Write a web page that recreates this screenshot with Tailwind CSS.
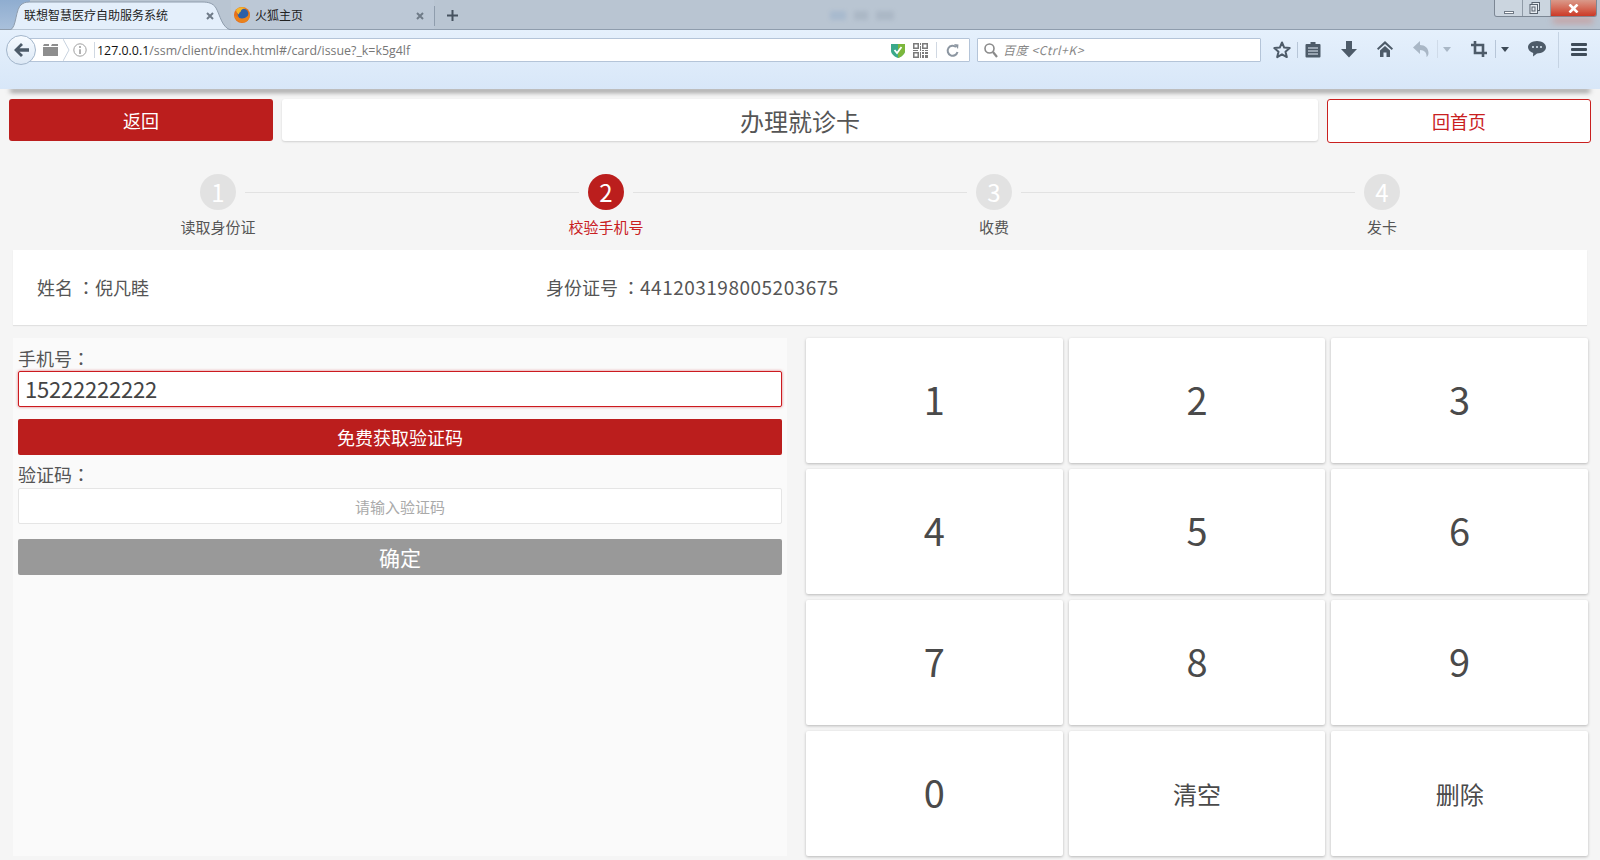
<!doctype html>
<html lang="zh">
<head>
<meta charset="utf-8">
<title>联想智慧医疗自助服务系统</title>
<script src="https://cdn.jsdelivr.net/npm/@tailwindcss/browser@4"></script>
</head>
<body class="w-[1600px] h-[860px] overflow-hidden bg-[#f5f5f5] text-[#555] font-['Noto_Sans_CJK_SC','Noto_Sans',sans-serif]">

<!-- browser chrome -->
<div class="relative h-[89px] bg-[#dfecfa]">
  <div class="absolute -z-10 left-[10px] right-[10px] bottom-0 h-[3px] shadow-[0_3px_5px_rgba(0,0,0,0.55)]"></div>

  <!-- tab strip -->
  <div class="relative flex h-[30px] bg-[#b9c5d2] border-b border-[#8f9dad]">
    <div class="absolute left-0 top-0 w-[30px] h-[29px] bg-gradient-to-b from-[#8fadd0] to-[#a9c0db]"></div>
    <div class="relative w-[231px] h-[30px] shrink-0 flex items-center pl-[24px]">
      <svg class="absolute left-0 top-0" width="231" height="30" viewBox="0 0 231 30"><path d="M10 30C17 28 15 8 22 4C25 2 28 2 32 2H202C208 2 213 3 216 8C220 15 222 28 231 30Z" fill="#e4effb" stroke="#8f9dad"/></svg>
      <span class="relative text-[12px] leading-none text-[#222] whitespace-nowrap">联想智慧医疗自助服务系统</span>
      <svg class="absolute left-[206px] top-[12px]" width="8" height="8" viewBox="0 0 8 8"><path d="M1 1L7 7M7 1L1 7" stroke="#6f7b88" stroke-width="2"/></svg>
    </div>
    <div class="relative flex items-center w-[203px] h-[29px] bg-[#bcc8d6] pl-[3px]">
      <svg width="16" height="16" viewBox="0 0 16 16"><circle cx="8" cy="8" r="8" fill="#e8701a"/><circle cx="9" cy="7" r="5.4" fill="#2b5fa8"/><path d="M0.5 8C1 14 7 16.5 11.5 15C15 13.5 16.5 9.5 15.5 4.5C15 8.5 12 11.5 8 11.5C5 11.5 2.5 10 0.5 8Z" fill="#e9821c"/><path d="M2 3C4 0 9 -0.5 12 1.5C9 1 7 2.5 6.5 5C5.5 5 5 6 5 7.5C3.5 6.5 2.5 5 2 3Z" fill="#f5b62e"/></svg>
      <span class="ml-[5px] text-[12px] leading-none text-[#222] whitespace-nowrap">火狐主页</span>
      <svg class="absolute left-[185px] top-[12px]" width="8" height="8" viewBox="0 0 8 8"><path d="M1 1L7 7M7 1L1 7" stroke="#6f7b88" stroke-width="2"/></svg>
    </div>
    <div class="w-px h-[20px] mt-[6px] bg-[#8f9dad]"></div>
    <svg class="ml-[12px] mt-[10px]" width="11" height="11" viewBox="0 0 11 11"><path d="M5.5 0V11M0 5.5H11" stroke="#46525f" stroke-width="2"/></svg>

    <div class="absolute left-[830px] top-[11px] flex gap-[8px] opacity-40 blur-[2px]">
      <div class="w-[16px] h-[9px] bg-[#8fa9c8]"></div>
      <div class="w-[14px] h-[9px] bg-[#97a4b3]"></div>
      <div class="w-[18px] h-[9px] bg-[#97a4b3]"></div>
    </div>

    <!-- window controls -->
    <div class="absolute left-[1494px] top-0 w-[103px] h-[17px] flex border border-t-0 border-[#7c8794] rounded-b-[3px] overflow-hidden">
      <div class="w-[28px] bg-[#d3dbe4]/70 border-r border-[#8f9aa6] flex items-end justify-center pb-[2px]"><div class="w-[10px] h-[3px] bg-white border border-[#707a86]"></div></div>
      <div class="w-[27px] bg-[#d3dbe4]/70 flex items-center justify-start pl-[6px]"><svg width="11" height="12" viewBox="0 0 11 12"><rect x="3" y="0.5" width="7.5" height="8" fill="#e6ebf0" stroke="#59636e"/><rect x="1" y="2.5" width="7.5" height="9" fill="#e6ebf0" stroke="#59636e"/><rect x="3" y="5" width="3" height="4" fill="none" stroke="#59636e"/></svg></div>
      <div class="flex-1 bg-gradient-to-b from-[#d9998a] to-[#cb3321] border-l border-[#8f9aa6] flex items-center justify-center"><svg width="11" height="9" viewBox="0 0 11 9"><path d="M1.5 0.5L9.5 8.5M9.5 0.5L1.5 8.5" stroke="#fff" stroke-width="2.6"/></svg></div>
    </div>
    <div class="absolute left-[1553px] top-[18px] w-[40px] h-[5px] bg-[#d9705f]/50 blur-[3px]"></div>
  </div>

  <!-- nav row -->
  <div class="relative h-[59px] bg-gradient-to-b from-[#e5f0fc] to-[#d8e7f8] pt-[8px]">
    <div class="flex items-start">
      <div class="ml-[20px] w-[950px] h-[24px] bg-white border border-[#b4c4d8] rounded-[1px] flex items-center pl-[22px]">
        <svg width="15" height="12" viewBox="0 0 15 12"><path d="M0 2H6V0H1ZM8 2H15V0H9ZM0 3H15V12H0Z" fill="#8e8e8e"/></svg>
        <svg class="ml-[5px]" width="7" height="22" viewBox="0 0 7 22"><path d="M0 0L6 11L0 22" fill="none" stroke="#c8d3df"/></svg>
        <svg class="ml-[3px]" width="14" height="14" viewBox="0 0 14 14"><circle cx="7" cy="7" r="6.2" fill="none" stroke="#a0a0a0"/><path d="M7 3V5M7 6.2V11" stroke="#999" stroke-width="1.5"/></svg>
        <div class="ml-[7px] w-px h-[16px] bg-[#d0d8e2]"></div>
        <span class="ml-[2px] pt-[2px] text-[12.4px] leading-none font-['Open_Sans',sans-serif] text-[#777] whitespace-nowrap"><span class="text-[#111]">127.0.0.1</span>/ssm/client/index.html#/card/issue?_k=k5g4lf</span>
        <svg class="ml-auto" width="14" height="15" viewBox="0 0 14 15"><path d="M0 1H14V8C14 11 10 14 7 15C4 14 0 11 0 8Z" fill="#3aa98a"/><path d="M7 1H14V8C14 11 10 14 7 15Z" fill="#7cb73c"/><path d="M3.5 7L6 10L10.5 4" fill="none" stroke="#fff" stroke-width="1.8"/></svg>
        <svg class="ml-[8px]" width="15" height="15" viewBox="0 0 15 15" fill="#7b7b7b"><path d="M0 0H6V6H0ZM1.5 1.5V4.5H4.5V1.5ZM9 0H15V6H9ZM10.5 1.5V4.5H13.5V1.5ZM0 9H6V15H0ZM1.5 10.5V13.5H4.5V10.5ZM7 0H8V2H7ZM7 3H8V8H7ZM9 7H11V8H9ZM12 7H15V8H12ZM0 7H5V8H0ZM9 9H11V11H9ZM12 9H15V11H12ZM7 9H8V15H7ZM9 12H11V15H9ZM12 12H15V15H12Z"/></svg>
        <div class="ml-[8px] w-px h-[16px] bg-[#d0d8e2]"></div>
        <svg class="ml-[9px] mr-[10px]" width="13" height="15" viewBox="0 0 13 15"><path d="M10 4A5 5 0 1 0 11.5 9" fill="none" stroke="#8c96a1" stroke-width="2"/><path d="M8 1L12.5 1.5L12 6Z" fill="#8c96a1"/></svg>
      </div>
      <div class="ml-[7px] w-[284px] h-[24px] bg-white border border-[#b4c4d8] rounded-[1px] flex items-center pl-[6px]">
        <svg width="14" height="15" viewBox="0 0 14 15"><circle cx="5.5" cy="5.5" r="4.5" fill="none" stroke="#8a8a8a" stroke-width="1.6"/><path d="M9 9L13 14" stroke="#8a8a8a" stroke-width="2.2"/></svg>
        <span class="ml-[5px] text-[12px] leading-none italic tracking-[0.6px] text-[#888] whitespace-nowrap font-['Noto_Sans_CJK_SC','Open_Sans',sans-serif]">百度 &lt;Ctrl+K&gt;</span>
      </div>

      <svg class="ml-[12px] mt-[3px]" width="18" height="18" viewBox="0 0 18 18"><path d="M9 1.5L11.2 6.6L16.7 7.1L12.5 10.7L13.8 16.1L9 13.3L4.2 16.1L5.5 10.7L1.3 7.1L6.8 6.6Z" fill="none" stroke="#4d5b69" stroke-width="2" stroke-linejoin="round"/></svg>
      <div class="ml-[6px] mt-[4px] w-px h-[16px] bg-[#b7c6d8]"></div>
      <svg class="ml-[7px] mt-[3px]" width="16" height="17" viewBox="0 0 16 17"><path d="M1.5 3H5.5V1H10.5V3H14.5Q15.5 3 15.5 4V15.5Q15.5 16.5 14.5 16.5H1.5Q0.5 16.5 0.5 15.5V4Q0.5 3 1.5 3Z" fill="#4d5b69"/><path d="M3 7H13M3 10H13M3 13H13" stroke="#e4eefa" stroke-width="1.2"/></svg>
      <svg class="ml-[20px] mt-[3px]" width="16" height="17" viewBox="0 0 16 17"><path d="M5 0H11V8H16L8 16.5L0 8H5Z" fill="#4d5b69"/></svg>
      <svg class="ml-[20px] mt-[3px]" width="16" height="16" viewBox="0 0 16 16"><path d="M8 0L16 7.5L14.8 9L8 3L1.2 9L0 7.5Z" fill="#4d5b69"/><path d="M3 9.5L8 5L13 9.5V16H9.5V11.5H6.5V16H3Z" fill="#4d5b69"/></svg>
      <svg class="ml-[20px] mt-[3px]" width="16" height="16" viewBox="0 0 16 16"><path d="M7 0V4C12 4 15.5 7 15.5 12C15.5 14 14.5 15.5 13.5 16C14 12 11.5 9 7 9V13L0 6.5Z" fill="#a9b7c6"/></svg>
      <div class="ml-[8px] mt-[2px] w-px h-[18px] bg-[#cfdbe9]"></div>
      <svg class="ml-[5px] mt-[9px]" width="8" height="5" viewBox="0 0 8 5"><path d="M0 0H8L4 5Z" fill="#a9b7c6"/></svg>
      <svg class="ml-[20px] mt-[3px]" width="16" height="16" viewBox="0 0 16 16"><path d="M4 0V12H16M0 4H12V16" fill="none" stroke="#4d5b69" stroke-width="2.6"/></svg>
      <div class="ml-[8px] mt-[2px] w-px h-[18px] bg-[#b7c6d8]"></div>
      <svg class="ml-[5px] mt-[9px]" width="8" height="5" viewBox="0 0 8 5"><path d="M0 0H8L4 5Z" fill="#3d4a57"/></svg>
      <svg class="ml-[19px] mt-[3px]" width="18" height="16" viewBox="0 0 18 16"><path d="M9 0C14 0 18 2.8 18 6.3C18 9.8 14 12.5 9 12.5L5 15.5L5.2 12C2.2 11 0 8.9 0 6.3C0 2.8 4 0 9 0Z" fill="#4d5b69"/><circle cx="5" cy="6" r="1" fill="#dfecfa"/><circle cx="9" cy="6" r="1" fill="#dfecfa"/><circle cx="13" cy="6" r="1" fill="#dfecfa"/></svg>
      <div class="ml-[12px] -mt-[6px] w-px h-[36px] bg-[#c5d3e3]"></div>
      <div class="ml-[12px] mt-[5px] w-[16px] flex flex-col gap-[2px]">
        <div class="h-[3px] rounded-[1px] bg-[#3f4c59]"></div>
        <div class="h-[3px] rounded-[1px] bg-[#3f4c59]"></div>
        <div class="h-[3px] rounded-[1px] bg-[#3f4c59]"></div>
      </div>
    </div>
    <div class="absolute left-[6px] top-[5px] w-[30px] h-[30px] rounded-full bg-gradient-to-b from-[#f7fbff] to-[#dce8f5] border border-[#a3b6cb] flex items-center justify-center">
      <svg width="15" height="14" viewBox="0 0 15 14"><path d="M7 0L9 2L5.5 5.3H15V8.7H5.5L9 12L7 14L0 7Z" fill="#4d5b69"/></svg>
    </div>
  </div>
</div>

<!-- page -->
<main>
  <!-- header -->
  <div class="mt-[10px] pl-[9px] flex items-start">
    <button class="w-[264px] h-[42px] rounded-[3px] bg-[#bb1e1d] text-white text-[18px]">返回</button>
    <div class="ml-[9px] w-[1036px] h-[42px] pt-[2px] rounded-[3px] bg-white shadow-[0_1px_2px_rgba(0,0,0,0.15)] flex items-center justify-center text-[24px] text-[#555]">办理就诊卡</div>
    <button class="ml-[9px] w-[264px] h-[44px] rounded-[3px] bg-white border border-[#c9201f] text-[#c9201f] text-[18px]">回首页</button>
  </div>

  <!-- steps -->
  <div class="mt-[31px] pl-[200px] pr-[200px] flex items-center">
    <div class="w-[36px] h-[36px] rounded-full bg-[#e2e2e2] text-white text-[24px] leading-none flex items-center justify-center">1</div>
    <div class="flex-1 mx-[9px] h-px bg-[#e2e2e2]"></div>
    <div class="w-[36px] h-[36px] rounded-full bg-[#bb1e1d] text-white text-[24px] leading-none flex items-center justify-center">2</div>
    <div class="flex-1 mx-[9px] h-px bg-[#e2e2e2]"></div>
    <div class="w-[36px] h-[36px] rounded-full bg-[#e2e2e2] text-white text-[24px] leading-none flex items-center justify-center">3</div>
    <div class="flex-1 mx-[9px] h-px bg-[#e2e2e2]"></div>
    <div class="w-[36px] h-[36px] rounded-full bg-[#e2e2e2] text-white text-[24px] leading-none flex items-center justify-center">4</div>
  </div>
  <div class="mt-[6px] mx-[24px] grid grid-cols-4 text-[15px] leading-[22px] text-center">
    <div>读取身份证</div>
    <div class="text-[#c9201f]">校验手机号</div>
    <div>收费</div>
    <div>发卡</div>
  </div>

  <!-- patient info -->
  <div class="mt-[12px] ml-[13px] w-[1574px] h-[75px] bg-white shadow-[0_1px_1px_rgba(0,0,0,0.08)] flex items-center text-[18px] text-[#555]">
    <div class="ml-[24px] w-[509px]">姓名 <span lang="zh-TW" class="font-['Noto_Sans_CJK_TC']">：</span>倪凡睦</div>
    <div>身份证号 <span lang="zh-TW" class="font-['Noto_Sans_CJK_TC']">：</span><span class="text-[19px] tracking-[0.5px]">441203198005203675</span></div>
  </div>

  <div class="mt-[13px] ml-[13px] flex items-start">
    <!-- form -->
    <div class="w-[774px] h-[518px] bg-[#fafafa] px-[5px] pt-[8px] text-[18px]">
      <div class="h-[25px] leading-[25px]">手机号<span lang="zh-TW" class="font-['Noto_Sans_CJK_TC']">：</span></div>
      <input class="block w-full h-[36px] bg-white border border-[#cc1a1f] rounded-[2px] shadow-[0_0_3px_rgba(200,20,30,0.6)] pl-[6px] pb-[2px] text-[22px] tracking-[-0.2px] text-[#444] outline-none" value="15222222222">
      <button class="block mt-[12px] w-full h-[36px] rounded-[2px] bg-[#bb1e1d] text-white text-[18px]">免费获取验证码</button>
      <div class="mt-[8px] h-[25px] leading-[23px]">验证码<span lang="zh-TW" class="font-['Noto_Sans_CJK_TC']">：</span></div>
      <input class="block w-full h-[36px] bg-white border border-[#e5e5e5] rounded-[2px] text-center text-[15px] placeholder:text-[#aaa] outline-none" placeholder="请输入验证码">
      <button class="block mt-[15px] w-full h-[36px] pt-[1px] rounded-[2px] bg-[#999] text-white text-[21px]">确定</button>
    </div>

    <!-- keypad -->
    <div class="ml-[19px] w-[782px] h-[518px] grid grid-cols-3 grid-rows-4 gap-[6px] text-[#4a4a4a]">
      <button class="bg-white rounded-[2px] shadow-[0_1px_3px_rgba(0,0,0,0.25)] text-[38px] pb-[4px]">1</button>
      <button class="bg-white rounded-[2px] shadow-[0_1px_3px_rgba(0,0,0,0.25)] text-[38px] pb-[4px]">2</button>
      <button class="bg-white rounded-[2px] shadow-[0_1px_3px_rgba(0,0,0,0.25)] text-[38px] pb-[4px]">3</button>
      <button class="bg-white rounded-[2px] shadow-[0_1px_3px_rgba(0,0,0,0.25)] text-[38px] pb-[4px]">4</button>
      <button class="bg-white rounded-[2px] shadow-[0_1px_3px_rgba(0,0,0,0.25)] text-[38px] pb-[4px]">5</button>
      <button class="bg-white rounded-[2px] shadow-[0_1px_3px_rgba(0,0,0,0.25)] text-[38px] pb-[4px]">6</button>
      <button class="bg-white rounded-[2px] shadow-[0_1px_3px_rgba(0,0,0,0.25)] text-[38px] pb-[4px]">7</button>
      <button class="bg-white rounded-[2px] shadow-[0_1px_3px_rgba(0,0,0,0.25)] text-[38px] pb-[4px]">8</button>
      <button class="bg-white rounded-[2px] shadow-[0_1px_3px_rgba(0,0,0,0.25)] text-[38px] pb-[4px]">9</button>
      <button class="bg-white rounded-[2px] shadow-[0_1px_3px_rgba(0,0,0,0.25)] text-[38px] pb-[4px]">0</button>
      <button class="bg-white rounded-[2px] shadow-[0_1px_3px_rgba(0,0,0,0.25)] text-[24px]">清空</button>
      <button class="bg-white rounded-[2px] shadow-[0_1px_3px_rgba(0,0,0,0.25)] text-[24px]">删除</button>
    </div>
  </div>
</main>
</body>
</html>
